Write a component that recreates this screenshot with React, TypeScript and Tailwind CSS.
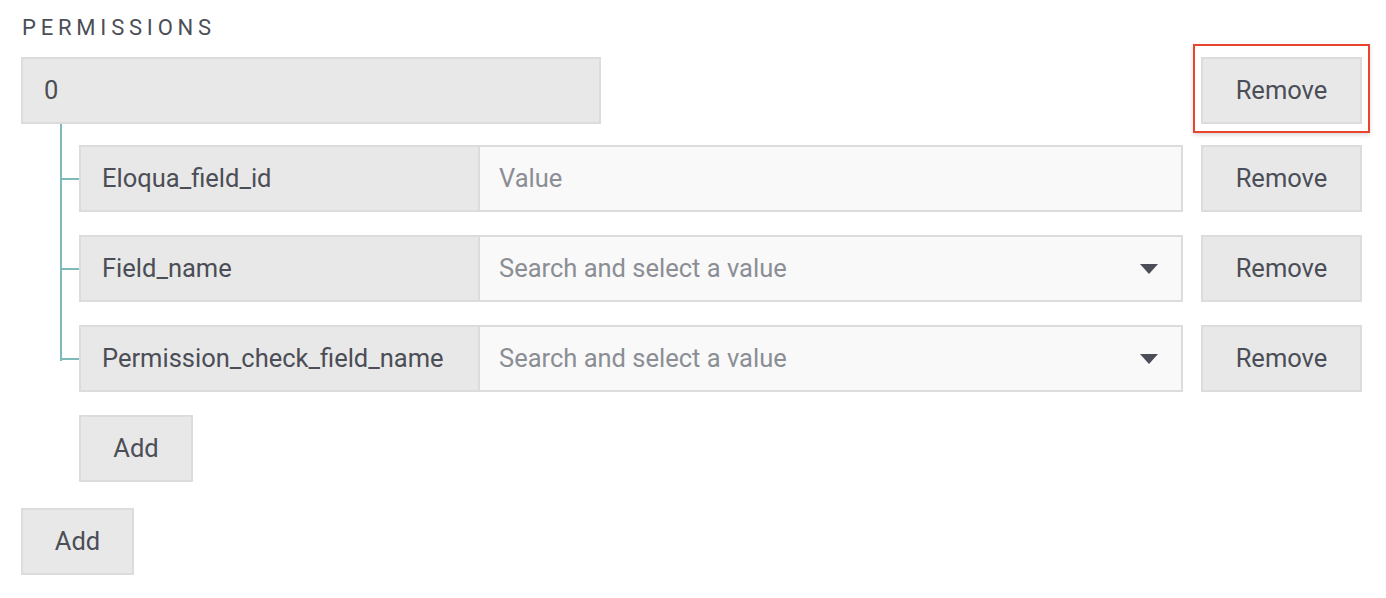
const font = { fontFamily: "Roboto, 'Liberation Sans', sans-serif" };

type Child = { label: string; kind: "text" | "select" };

const children: Child[] = [
  { label: "Eloqua_field_id", kind: "text" },
  { label: "Field_name", kind: "select" },
  { label: "Permission_check_field_name", kind: "select" },
];

function GrayButton({ label, className = "" }: { label: string; className?: string }) {
  return (
    <button
      className={`h-[67px] border-2 border-[#dcdcdc] bg-[#e8e8e8] text-[25.5px] text-[#4b4e56] flex items-center justify-center ${className}`}
    >
      {label}
    </button>
  );
}

export default function App() {
  return (
    <div style={font} className="w-[1386px] h-[598px] bg-white pl-[21px] pr-[24px] pt-[13px] text-[#4b4e56]">
      <div className="text-[22px] tracking-[4.8px] leading-[30px] pl-[1px]">PERMISSIONS</div>

      {/* item 0 */}
      <div className="flex mt-[14px]">
        <div className="w-[580px] h-[67px] border-2 border-[#dcdcdc] bg-[#e8e8e8] flex items-center pl-[21px] text-[25.5px]">
          0
        </div>
        <div className="ml-auto relative">
          <span className="absolute -left-[8px] -right-[8px] -top-[13px] -bottom-[9px] border-2 border-[#e8442f] shadow-[0_2px_4px_rgba(0,0,0,0.15)]" />
          <GrayButton label="Remove" className="w-[161px] relative" />
        </div>
      </div>

      {/* nested fields */}
      <div className="relative pl-[58px] pt-[21px] flex flex-col gap-[23px]">
        <span className="absolute left-[39px] top-0 w-[2px] h-[237px] bg-[#7fb9b9]" />
        {children.map((c) => (
          <div key={c.label} className="relative flex">
            <span className="absolute -left-[19px] top-[33px] w-[19px] h-[2px] bg-[#7fb9b9]" />
            <div className="w-[399px] h-[67px] border-2 border-r-0 border-[#dcdcdc] bg-[#e8e8e8] flex items-center pl-[21px] text-[25.5px] whitespace-nowrap">
              {c.label}
            </div>
            <div className="w-[705px] h-[67px] border-2 border-[#dcdcdc] bg-[#f9f9f9] flex items-center pl-[19px] pr-[23px] text-[25.5px] text-[#8b8e94]">
              <span className="flex-1">{c.kind === "text" ? "Value" : "Search and select a value"}</span>
              {c.kind === "select" && (
                <svg width="18" height="10" viewBox="0 0 18 10">
                  <path d="M0 0h18L9 10z" fill="#4b4e56" />
                </svg>
              )}
            </div>
            <GrayButton label="Remove" className="w-[161px] ml-auto" />
          </div>
        ))}
        <GrayButton label="Add" className="w-[114px]" />
      </div>

      <GrayButton label="Add" className="w-[113px] mt-[26px]" />
    </div>
  );
}
